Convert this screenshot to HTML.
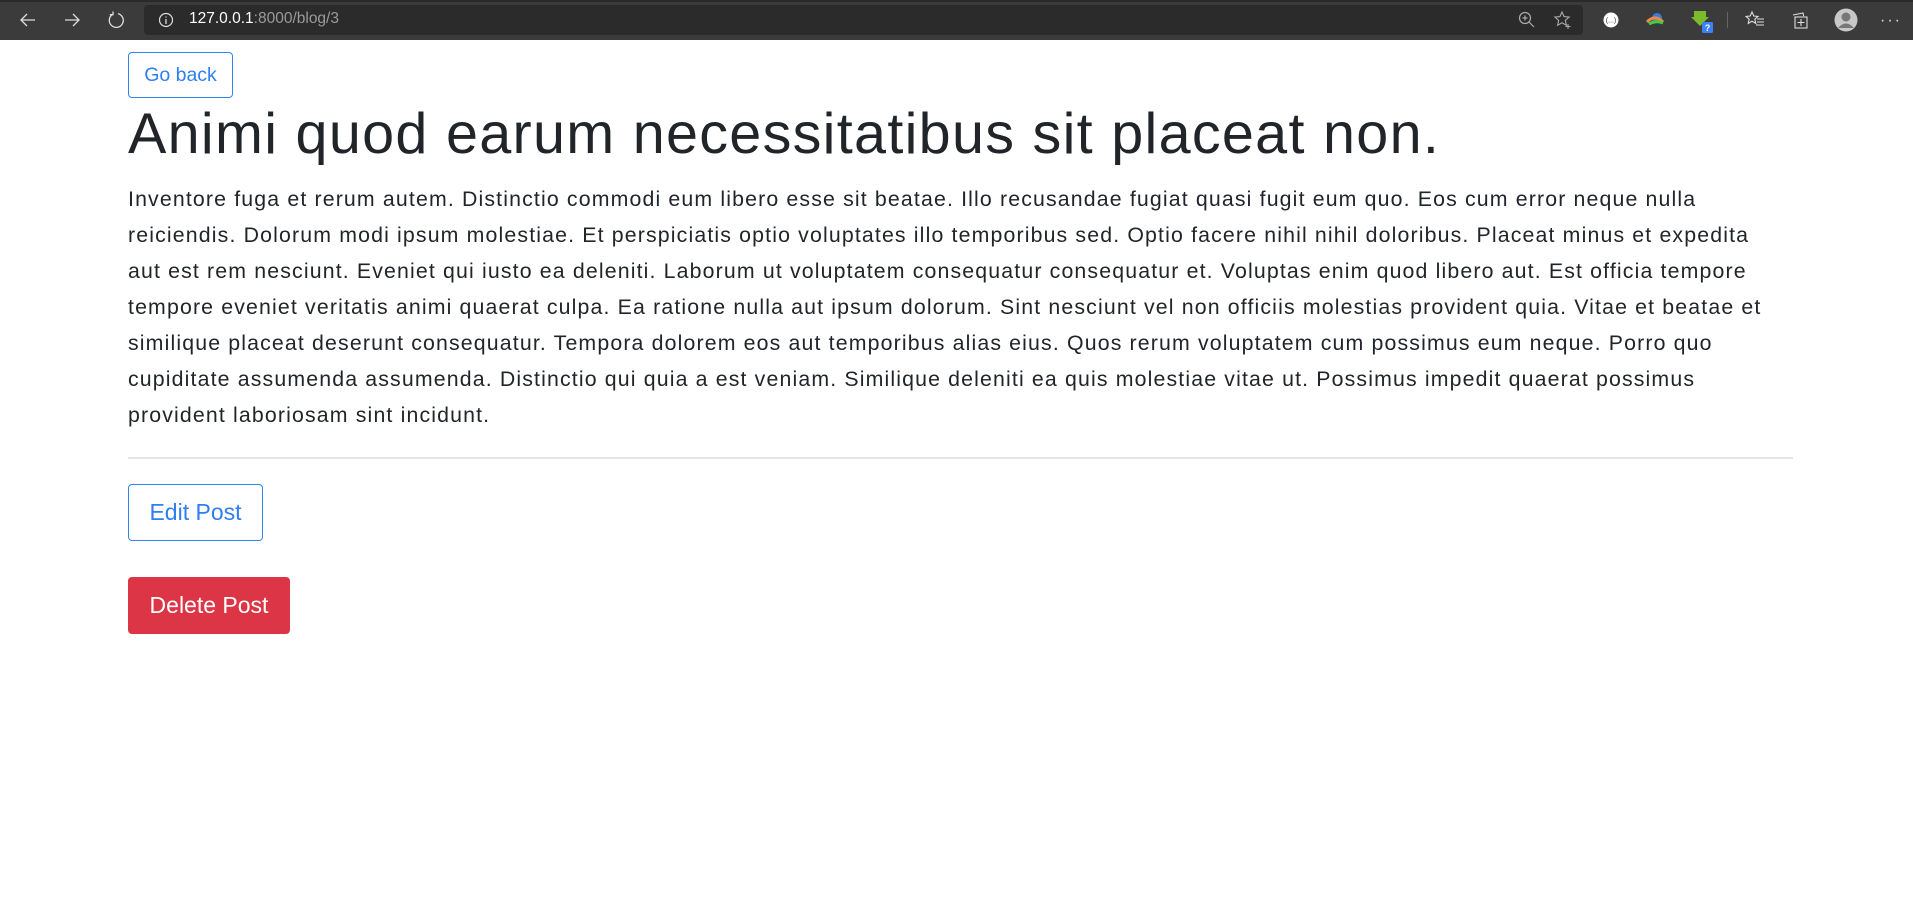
<!DOCTYPE html>
<html><head><meta charset="utf-8"><style>
html,body{margin:0;padding:0;width:1913px;height:901px;overflow:hidden;background:#fff;font-family:"Liberation Sans",sans-serif;}
.bar{position:absolute;left:0;top:0;width:1913px;height:40px;background:#3b3b3b;border-top:2px solid #2a2a2a;box-sizing:border-box;}
.addr{position:absolute;left:144px;top:5px;width:1439px;height:30px;background:#2b2b2b;border-radius:4px;}
.url{position:absolute;left:189px;top:10px;font-size:15.5px;color:#fff;}
.url span{color:#9a9a9a}
svg.i{position:absolute;}
.btn{position:absolute;box-sizing:border-box;border-radius:4px;display:flex;align-items:center;justify-content:center;}
.ob{border:1px solid #2f86f0;color:#2f7ff0;}
h1{position:absolute;left:128px;top:100px;margin:0;font-weight:normal;font-size:57.5px;line-height:68px;color:#212529;white-space:nowrap;letter-spacing:1.3px}
.p{position:absolute;left:128px;top:181px;font-size:21.3px;line-height:36px;color:#212529;white-space:nowrap;letter-spacing:1.15px}
hr{position:absolute;left:128px;top:457px;width:1665px;margin:0;border:0;border-top:2px solid #e6e6e6;}
</style></head><body>
<div class="bar"></div>
<div class="addr"></div>
<svg class="i" style="left:18px;top:10px" width="20" height="20" viewBox="0 0 20 20"><path d="M17 10H3M9 4L3 10l6 6" fill="none" stroke="#ddd" stroke-width="1.3"/></svg>
<svg class="i" style="left:62px;top:10px" width="20" height="20" viewBox="0 0 20 20"><path d="M3 10h14M11 4l6 6-6 6" fill="none" stroke="#ddd" stroke-width="1.3"/></svg>
<svg class="i" style="left:106px;top:10px" width="20" height="20" viewBox="0 0 20 20"><path d="M7 4.2A7 7 0 1 0 12 3.6M7 1.5v3.2H3.8" fill="none" stroke="#ddd" stroke-width="1.3"/></svg>
<svg class="i" style="left:158px;top:12px" width="16" height="16" viewBox="0 0 16 16"><circle cx="8" cy="8" r="6.5" fill="none" stroke="#ddd" stroke-width="1.2"/><path d="M8 7v5M8 4.5v1" stroke="#ddd" stroke-width="1.3"/></svg>
<div class="url">127.0.0.1<span>:8000/blog/3</span></div>
<svg class="i" style="left:1517px;top:10px" width="20" height="20" viewBox="0 0 20 20"><circle cx="8" cy="8" r="5.5" fill="none" stroke="#aaa" stroke-width="1.2"/><path d="M12 12l5 5M8 5.5v5M5.5 8h5" stroke="#aaa" stroke-width="1.2"/></svg>
<svg class="i" style="left:1553px;top:10px" width="20" height="20" viewBox="0 0 20 20"><path d="M9 2l2.1 4.6 5 .5-3.8 3.3 1.1 4.9L9 12.8l-4.4 2.5 1.1-4.9L1.9 7.1l5-.5z" fill="none" stroke="#aaa" stroke-width="1.1"/><path d="M15 14v5M12.5 16.5h5" stroke="#aaa" stroke-width="1.1"/></svg>
<svg class="i" style="left:1603px;top:12px" width="16" height="16" viewBox="0 0 16 16"><circle cx="8" cy="8" r="7.5" fill="#fff"/><text x="8" y="10.5" font-size="7" text-anchor="middle" fill="#333" font-family="Liberation Sans">(...)</text></svg>
<svg class="i" style="left:1645px;top:10px" width="22" height="20" viewBox="0 0 22 20"><circle cx="12" cy="8" r="5" fill="#3a7bd5"/><path d="M2 12q8-8 16 0" fill="none" stroke="#e84" stroke-width="3"/><path d="M4 14q7-4 14-1" fill="none" stroke="#4c4" stroke-width="3"/></svg>
<svg class="i" style="left:1690px;top:8px" width="24" height="26" viewBox="0 0 24 26"><path d="M4 3h12v6h3l-9 9-9-9h3z" fill="#7cbb2a"/><rect x="12" y="14" width="11" height="11" rx="1.5" fill="#3b82f6"/><text x="17.5" y="23" font-size="9" font-weight="bold" text-anchor="middle" fill="#fff" font-family="Liberation Sans">?</text></svg>
<div style="position:absolute;left:1727px;top:12px;width:1px;height:16px;background:#666"></div>
<svg class="i" style="left:1745px;top:10px" width="20" height="20" viewBox="0 0 20 20"><path d="M7 2l1.8 4 4.2.4-3.2 2.8 1 4.2L7 11.3l-3.8 2.1 1-4.2L1 6.4l4.2-.4z" fill="none" stroke="#ddd" stroke-width="1.1"/><path d="M12 9h7M12 12h7M11 15h8" stroke="#ddd" stroke-width="1.1"/></svg>
<svg class="i" style="left:1790px;top:10px" width="20" height="20" viewBox="0 0 20 20"><path d="M3 5l10-2 .6 3" fill="none" stroke="#ddd" stroke-width="1.1"/><rect x="5" y="7" width="12" height="11" fill="none" stroke="#ddd" stroke-width="1.1"/><path d="M11 9v7M7.5 12.5h7" stroke="#ddd" stroke-width="1.1"/></svg>
<svg class="i" style="left:1834px;top:8px" width="24" height="24" viewBox="0 0 24 24"><circle cx="12" cy="12" r="11.5" fill="#c8c8c8"/><circle cx="12" cy="9" r="4.5" fill="#777"/><path d="M4 20q8-9 16 0" fill="#777"/></svg>
<div style="position:absolute;left:1880px;top:12px;color:#ddd;font-size:16px;letter-spacing:2px">···</div>

<div class="btn ob" style="left:128px;top:52px;width:105px;height:46px;font-size:19.5px;">Go back</div>
<h1>Animi quod earum necessitatibus sit placeat non.</h1>
<div class="p">Inventore fuga et rerum autem. Distinctio commodi eum libero esse sit beatae. Illo recusandae fugiat quasi fugit eum quo. Eos cum error neque nulla<br>reiciendis. Dolorum modi ipsum molestiae. Et perspiciatis optio voluptates illo temporibus sed. Optio facere nihil nihil doloribus. Placeat minus et expedita<br>aut est rem nesciunt. Eveniet qui iusto ea deleniti. Laborum ut voluptatem consequatur consequatur et. Voluptas enim quod libero aut. Est officia tempore<br>tempore eveniet veritatis animi quaerat culpa. Ea ratione nulla aut ipsum dolorum. Sint nesciunt vel non officiis molestias provident quia. Vitae et beatae et<br>similique placeat deserunt consequatur. Tempora dolorem eos aut temporibus alias eius. Quos rerum voluptatem cum possimus eum neque. Porro quo<br>cupiditate assumenda assumenda. Distinctio qui quia a est veniam. Similique deleniti ea quis molestiae vitae ut. Possimus impedit quaerat possimus<br>provident laboriosam sint incidunt.</div>
<hr>
<div class="btn ob" style="left:128px;top:484px;width:135px;height:57px;font-size:23px;">Edit Post</div>
<div class="btn" style="left:128px;top:577px;width:162px;height:57px;font-size:23px;background:#dc3545;color:#fff;">Delete Post</div>
</body></html>
